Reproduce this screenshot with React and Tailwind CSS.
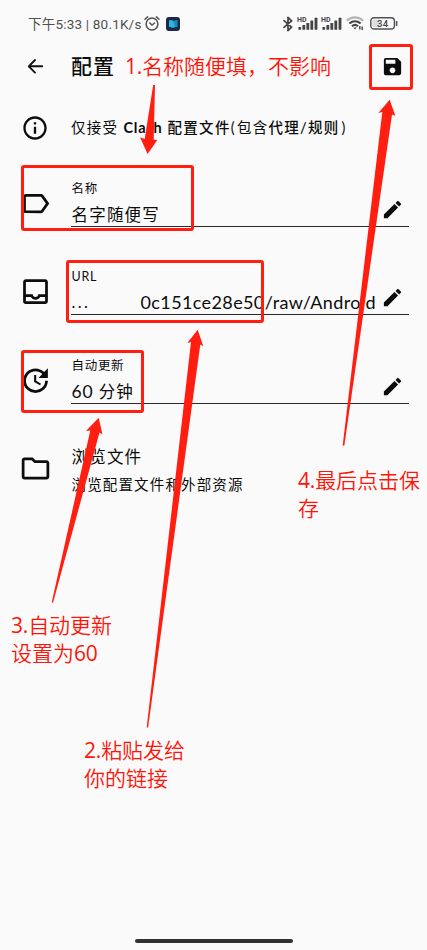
import React from "react";
import {
  MdSave,
  MdEdit,
  MdInfoOutline,
  MdLabelOutline,
  MdOutlineInbox,
  MdUpdate,
  MdOutlineFolder,
} from "react-icons/md";

function Signal() {
  return (
    <svg className="h-[15px] w-[22px]" viewBox="0 0 22 15" fill="#444">
      <text x="0" y="6" fontSize="7" fontWeight="700" fontFamily="Roboto, sans-serif" textLength="9.5" lengthAdjust="spacingAndGlyphs">HD</text>
      <rect x="1.4" y="11" width="2.7" height="2.8" rx="0.5" />
      <rect x="5.4" y="9" width="2.8" height="4.8" rx="0.5" />
      <rect x="9.4" y="7" width="2.8" height="6.8" rx="0.5" />
      <rect x="13.4" y="4.6" width="2.8" height="9.2" rx="0.5" />
      <rect x="17.6" y="1.8" width="2.8" height="12" rx="0.5" />
    </svg>
  );
}

function StatusBar() {
  return (
    <div className="flex h-[47px] items-center pr-[28px] pl-[28px] text-[#505050]">
      <span className="w-[116px] shrink-0 whitespace-nowrap text-[13.5px] leading-[18px] tracking-[0.2px] font-[Roboto,'Noto_Sans_CJK_SC',sans-serif]">
        下午5:33 | 80.1K/s
      </span>
      <svg className="h-[16px] w-[16px]" viewBox="0 0 16 16" fill="none" stroke="#505050" strokeWidth="1.5" strokeLinecap="round">
        <circle cx="8" cy="8" r="5.9" />
        <path d="M1 3.2 3.6 .9M15 3.2 12.4 .9M5.8 7 8 9l2.6-2" />
      </svg>
      <svg className="ml-[6px] h-[14px] w-[14px]" viewBox="0 0 14 14">
        <rect width="14" height="14" rx="3" fill="#182a48" />
        <path d="M3 3.6Q5 2.6 7 3.8L11.5 3v7Q9 9.6 7.2 10.8L3 9.8Z" fill="#168cc4" />
        <path d="M3 3.6Q5 2.6 7 3.8L9 9.8 7.2 10.8 3 9.8Z" fill="#30b4de" />
      </svg>
      <svg className="ml-[103px] h-[16px] w-[10px]" viewBox="0 0 10 16" fill="none" stroke="#444" strokeWidth="1.7" strokeLinejoin="round" strokeLinecap="round">
        <path d="m1 4.6 7.6 6.6L5 14.6V1.4l3.6 3.4L1 11.4" />
      </svg>
      <div className="ml-[4px] flex gap-[2px]">
        <Signal />
        <Signal />
      </div>
      <svg className="ml-[3px] h-[15px] w-[18px]" viewBox="0 0 18 15" fill="none" strokeWidth="2.1">
        <path d="M.8 4.7C5.5.2 12.5.2 17.2 4.7" stroke="#b5b5b5" />
        <path d="M3.4 7.5C6.7 4.6 11.3 4.6 14.6 7.5" stroke="#444" />
        <path d="M6 10.2C7.7 8.6 10.2 8.6 12 10.2" stroke="#444" />
        <path d="M7.3 11.5h3.4L9 13.6Z" fill="#444" />
        <path d="M13.8 10v3.5M16.2 10.5V14" stroke="#444" strokeWidth="1.4" />
      </svg>
      <svg className="ml-[6px] h-[13px] w-[29px] shrink-0" viewBox="0 0 29 13">
        <rect x=".8" y=".8" width="23.6" height="11.2" rx="3.3" fill="#fafafa" stroke="#505050" strokeWidth="1.4" />
        <rect x="2.4" y="2.4" width="7.5" height="8" rx="1.5" fill="#ddd" />
        <path d="M26.6 4v5" stroke="#505050" strokeWidth="1.5" />
        <text x="12.6" y="9.8" textAnchor="middle" fontSize="9.5" fontWeight="500" fill="#444" fontFamily="Roboto, sans-serif" textLength="11">34</text>
      </svg>
    </div>
  );
}

function Field({ icon, label, children }) {
  return (
    <div className="flex h-[88.5px] pl-[19px]">
      <div className="flex h-[65px] w-[33px] items-center">{icon}</div>
      <div className="ml-[19px] flex h-[56px] w-[338px] border-b-[1.5px] border-[#2a2a2a]">
        <div className="w-[310px] pt-[7px] pl-[0.5px]">
          <div className="h-[22px] text-[12.5px] leading-[22px] tracking-[0.7px]">{label}</div>
          <div className="mt-[1px] h-[28px] text-[16.5px] leading-[28px] tracking-[1.2px] whitespace-nowrap">{children}</div>
        </div>
        <MdEdit className="mt-[27px] h-[23px] w-[23px]" />
      </div>
    </div>
  );
}

function Note({ className, children }) {
  return (
    <div className={"absolute text-[21px] leading-[28px] font-[350] whitespace-nowrap text-[#ff1408] font-['Open_Sans','Noto_Sans_CJK_SC',sans-serif] " + className}>
      {children}
    </div>
  );
}

function Num({ children }) {
  return <span className="font-normal tracking-[-0.2px]">{children}</span>;
}

export default function App() {
  return (
    <div className="relative flex h-[950px] w-[427px] flex-col overflow-hidden bg-[#fafafa] text-[#0c0c0c] font-[Lato,'Noto_Sans_CJK_SC',sans-serif]">
      <StatusBar />
      <header className="flex h-[38px] items-center pl-[25px]">
        <svg className="h-[22px] w-[22px]" viewBox="0 0 22 22" fill="none" stroke="#111" strokeWidth="1.9" strokeLinecap="round" strokeLinejoin="round">
          <path d="M17.2 11.3H4.5M10 5 3.8 11.3 10 17.6" />
        </svg>
        <h1 className="ml-[24px] w-[310px] text-[21px] leading-[30px] font-medium tracking-[1px]">配置</h1>
        <MdSave className="h-[23px] w-[23px]" />
      </header>

      <div className="mt-[2px] flex h-[82px] items-center pl-[21px]">
        <MdInfoOutline className="h-[28px] w-[28px]" />
        <p className="ml-[22px] text-[14.5px] leading-[22px] font-normal tracking-[1.3px] whitespace-nowrap">
          仅接受 <span className="font-medium"><b className="tracking-[0.8px]">Clash</b> 配置文件</span><span className="pr-[1px]">(</span>包含<span className="font-medium">代理/规则</span><span className="pl-[2px]">)</span>
        </p>
      </div>

      <main className="mt-[1.5px] flex flex-col">
        <Field label="名称" icon={<MdLabelOutline className="h-[33px] w-[33px]" />}>名字随便写</Field>
        <Field label="URL" icon={<MdOutlineInbox className="h-[33px] w-[33px]" />}>
          <span className="flex justify-between pr-[5px] leading-[26px]">
            <span className="tracking-[2.3px]">...</span>
            <span className="text-[18px] tracking-[0.38px]">0c151ce28e50/raw/Android</span>
          </span>
        </Field>
        <Field label="自动更新" icon={<MdUpdate className="h-[33px] w-[33px]" />}><span className="tracking-[0.9px]"><span className="text-[17.5px]">60</span> 分钟</span></Field>
        <div className="flex h-[65px] items-center pl-[19px]">
          <MdOutlineFolder className="h-[33px] w-[33px]" />
          <div className="mt-[4px] ml-[19.5px] whitespace-nowrap">
            <div className="text-[16.5px] leading-[28px] tracking-[1.2px]">浏览文件</div>
            <div className="text-[14.5px] leading-[28px] tracking-[1.15px]">浏览配置文件和外部资源</div>
          </div>
        </div>
      </main>

      <div className="mt-auto mb-[7px] ml-[135px] h-[4px] w-[158px] rounded-full bg-[#303331]" />

      <div className="absolute top-[44px] left-[369px] h-[46px] w-[44px] rounded-[3px] border-[3px] border-[#ff1e10]" />
      <div className="absolute top-[165px] left-[21px] h-[66px] w-[173px] rounded-[3px] border-[3px] border-[#ff1e10]" />
      <div className="absolute top-[260px] left-[66px] h-[63px] w-[198px] rounded-[3px] border-[3px] border-[#ff1e10]" />
      <div className="absolute top-[350px] left-[21px] h-[63px] w-[123px] rounded-[3px] border-[3px] border-[#ff1e10]" />

      <svg className="absolute top-0 left-0 h-[950px] w-[427px]" viewBox="0 0 427 950" fill="#ff1e10">
        <path d="M153.200 85h1.800L153.700 139.800 157.300 140 147.600 154 140 137.300 144.700 139Z" />
        <path d="M146.700 727.500 191 342 187.300 343 197.700 329.800 203.300 346.200 200.300 344.500 148.100 727.500Z" />
        <path d="M51.700 602.500 90.300 430.500 86 431 98.700 417.800 102.400 434.200 99.500 432.500 53 602.800Z" />
        <path d="M342.700 445.500 382.300 112 378.300 113 389.700 99.800 395.300 115.800 392 114.500 344.300 445.700Z" />
      </svg>

      <Note className="top-[52px] left-[125px]"><Num>1.</Num>名称随便填，不影响</Note>
      <Note className="top-[466px] left-[298px]"><Num>4.</Num>最后点击保<br />存</Note>
      <Note className="top-[611px] left-[11px]"><Num>3.</Num>自动更新<br />设置为<Num>60</Num></Note>
      <Note className="top-[736px] left-[84px]"><Num>2.</Num>粘贴发给<br />你的链接</Note>
    </div>
  );
}
